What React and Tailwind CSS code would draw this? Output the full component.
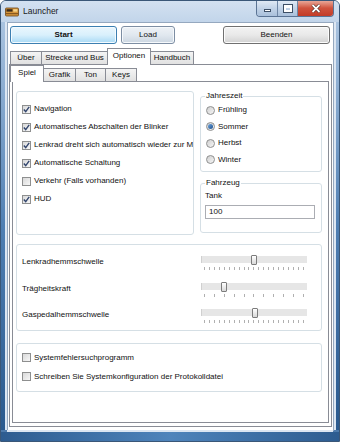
import React from 'react';

const Check = ({ checked, label }) => (
  <div className="flex items-center whitespace-nowrap h-full">
    <span className="w-[9px] h-[9px] shrink-0 border border-[#8e8f8f] bg-gradient-to-br from-[#d9d9d9] to-[#f7f7f7] flex items-center justify-center">
      {checked && (
        <svg width="7" height="7" viewBox="0 0 7 7">
          <path d="M0.8 3.6 L2.7 5.6 L6.2 0.9" stroke="#33466e" strokeWidth="1.4" fill="none" />
        </svg>
      )}
    </span>
    <span className="ml-[3px] text-[8px] leading-[10px] text-[#111]">{label}</span>
  </div>
);

const Radio = ({ checked, label }) => (
  <div className="flex items-center h-[16.5px] whitespace-nowrap">
    <span className="w-[9px] h-[9px] shrink-0 rounded-full border border-[#8e8f8f] bg-gradient-to-br from-[#cfcfcf] to-[#f6f6f6] flex items-center justify-center">
      {checked && <span className="w-[5px] h-[5px] rounded-full bg-gradient-to-br from-[#6fa6de] to-[#1d4f8c]" />}
    </span>
    <span className="ml-[3px] text-[8px] leading-[10px] text-[#111]">{label}</span>
  </div>
);

const Slider = ({ ticks, value }) => (
  <div className="relative w-[106px] h-[18px] shrink-0">
    <div className="absolute left-0 right-0 top-[3px] h-[7px] bg-[#e6e6e6] border-l border-[#d0d0d0]" />
    <div
      className="absolute top-[2px] w-[6px] h-[10px] rounded-[1px] border border-[#7c7c7c] bg-gradient-to-b from-[#ffffff] to-[#d8d8d8]"
      style={{ left: `${value * 100}px` }}
    />
    <div className="absolute left-[3px] right-[3px] top-[14px] h-[3px] flex justify-between">
      {Array.from({ length: ticks }).map((_, i) => (
        <span key={i} className="w-[1px] h-[3px] bg-[#b0b0b0]" />
      ))}
    </div>
  </div>
);

const Tab = ({ label, width, active }) =>
  active ? (
    <div
      className="relative z-10 -ml-[1px] -mb-[1px] h-[17px] border border-b-0 border-[#898c95] bg-white flex items-center justify-center pb-[2px] text-[8px]"
      style={{ width }}
    >
      {label}
    </div>
  ) : (
    <div
      className="-ml-[1px] first:ml-0 h-[13px] border border-b-0 border-[#898c95] bg-gradient-to-b from-[#f4f4f4] to-[#e1e1e1] flex items-center justify-center text-[8px]"
      style={{ width }}
    >
      {label}
    </div>
  );

const App = () => {
  return (
    <div className="w-[340px] h-[442px] flex flex-col border border-[#3a5778] rounded-t-[6px] bg-gradient-to-b from-[#c9d9ec] via-[#9bb8d9] to-[#4a78aa] font-['Liberation_Sans',Arial,sans-serif] text-[#111] overflow-hidden">
      {/* title bar */}
      <div className="h-[21px] shrink-0 flex items-start bg-gradient-to-b from-[#d3e1f1] to-[#c2d5ea]">
        <svg width="14" height="10" viewBox="0 0 14 10" className="ml-[4px] mt-[6px]">
          <rect x="0.5" y="1" width="13" height="8" rx="1" fill="#d4953c" stroke="#6b4418" strokeWidth="0.8" />
          <rect x="1.5" y="2.2" width="6" height="2.4" fill="#3b2a1a" />
          <rect x="8.3" y="2.2" width="4" height="2.4" fill="#f5d48a" />
          <rect x="1" y="6" width="12" height="1.2" fill="#8a5a20" />
        </svg>
        <span className="ml-[4px] mt-[5px] text-[8.5px] leading-[11px] text-[#1b1b1b]">Launcher</span>
        <div className="ml-auto mr-[5px] -mt-[1px] flex h-[17px] border border-t-0 border-[#5a7394] rounded-b-[4px] overflow-hidden">
          <div className="w-[21px] flex items-end justify-center pb-[4px] bg-gradient-to-b from-[#e4ecf6] via-[#c3d4e8] to-[#a9c0db] border-r border-[#6f87a6]">
            <span className="w-[7px] h-[3px] bg-white border border-[#3d4f66]" />
          </div>
          <div className="w-[20px] flex items-center justify-center bg-gradient-to-b from-[#e4ecf6] via-[#c3d4e8] to-[#a9c0db] border-r border-[#6f87a6]">
            <span className="w-[8px] h-[7px] border-[2px] border-t-[3px] border-white outline outline-1 outline-[#3d4f66]" />
          </div>
          <div className="w-[35px] flex items-center justify-center bg-gradient-to-b from-[#eab1a4] via-[#d0533e] to-[#c23b27]">
            <svg width="10" height="9" viewBox="0 0 10 9">
              <path d="M1.5 1 L8.5 8 M8.5 1 L1.5 8" stroke="#3d1a14" strokeWidth="3" />
              <path d="M1.5 1 L8.5 8 M8.5 1 L1.5 8" stroke="#ffffff" strokeWidth="1.8" />
            </svg>
          </div>
        </div>
      </div>

      {/* frame + client */}
      <div className="flex flex-1 min-h-0">
        <div className="w-[6px] flex">
          <div className="w-[4px] bg-gradient-to-b from-[#a9c3e0] via-[#4f7fb3] to-[#2b5a8e]" />
          <div className="w-[2px] bg-[#dce6f2]" />
        </div>

        <div className="w-[327px] h-[409px] border border-[#95a8bf] bg-white flex flex-col">
          {/* buttons */}
          <div className="flex pt-[3px] px-[2px] pr-[3px]">
            <button className="w-[107px] h-[18px] rounded-[3px] border border-[#3c7fb1] bg-gradient-to-b from-[#eaf6fd] via-[#d9f0fc] to-[#a7d9f5] text-[8px] font-bold shadow-[inset_0_0_0_1px_#f4fbff]">
              Start
            </button>
            <button className="ml-[4px] w-[54px] h-[18px] rounded-[3px] border border-[#7d8ea3] bg-gradient-to-b from-[#eef2f6] via-[#e1e8ef] to-[#cbd6e1] text-[8px] shadow-[inset_0_0_0_1px_#f6f9fc]">
              Load
            </button>
            <button className="ml-auto w-[107px] h-[18px] rounded-[3px] border border-[#707070] bg-gradient-to-b from-[#f3f3f3] via-[#e9e9e9] to-[#d2d2d2] text-[8px] shadow-[inset_0_0_0_1px_#fcfcfc]">
              Beenden
            </button>
          </div>

          {/* outer tab control */}
          <div className="mx-[1px] mt-[4px] flex flex-col">
            <div className="h-[16px] flex items-end pl-[1px]">
              <Tab label="Über" width={32} />
              <Tab label="Strecke und Bus" width={67} />
              <Tab label="Optionen" width={44} active />
              <Tab label="Handbuch" width={44} />
            </div>
            <div className="h-[363px] border border-[#898c95] bg-white pt-[1px] px-[2px]">
              {/* inner tab control */}
              <div className="h-[15px] flex items-end -ml-[1px]">
                <Tab label="Spiel" width={34} active />
                <Tab label="Grafik" width={33} />
                <Tab label="Ton" width={31} />
                <Tab label="Keys" width={32} />
              </div>
              <div className="h-[342px] border border-[#898c95] bg-white pl-[3px] pt-[9px]">
                <div className="flex">
                  <div className="w-[178px] h-[144px] border border-[#d5dfe5] rounded-[3px] overflow-hidden pl-[5px] pt-[8px]">
                    {[
                      ['Navigation', true],
                      ['Automatisches Abschalten der Blinker', true],
                      ['Lenkrad dreht sich automatisch wieder zur Mitte', true],
                      ['Automatische Schaltung', true],
                      ['Verkehr (Falls vorhanden)', false],
                      ['HUD', true],
                    ].map(([l, c]) => (
                      <div key={l} className="h-[18px]">
                        <Check label={l} checked={c} />
                      </div>
                    ))}
                  </div>

                  <div className="ml-[6px] w-[122px] flex flex-col">
                    <fieldset className="h-[81px] border border-[#d5dfe5] rounded-[3px] pl-[5px]">
                      <legend className="-ml-[1px] px-[1px] text-[8px] leading-[10px]">Jahreszeit</legend>
                      <div className="pt-[1px]">
                        <Radio label="Frühling" />
                        <Radio label="Sommer" checked />
                        <Radio label="Herbst" />
                        <Radio label="Winter" />
                      </div>
                    </fieldset>
                    <fieldset className="mt-[6px] h-[55px] border border-[#d5dfe5] rounded-[3px] pl-[4px]">
                      <legend className="px-[1px] text-[8px] leading-[10px]">Fahrzeug</legend>
                      <div className="pt-[3px] text-[8px] leading-[10px]">Tank</div>
                      <div className="mt-[4px] w-[110px] h-[14px] border border-[#abadb3] bg-white flex items-center pl-[3px] text-[8px]">
                        100
                      </div>
                    </fieldset>
                  </div>
                </div>

                <div className="mt-[9px] w-[306px] h-[87px] border border-[#d5dfe5] rounded-[3px] pl-[5px] pr-[14px] pt-[4px]">
                  {[
                    ['Lenkradhemmschwelle', 21, 0.5],
                    ['Trägheitskraft', 11, 0.2],
                    ['Gaspedalhemmschwelle', 21, 0.51],
                  ].map(([l, t, v]) => (
                    <div key={l} className="h-[26.5px] flex items-center">
                      <span className="flex-1 text-[8px] leading-[10px]">{l}</span>
                      <Slider ticks={t} value={v} />
                    </div>
                  ))}
                </div>

                <div className="mt-[12px] w-[306px] h-[49px] border border-[#d5dfe5] rounded-[3px] pl-[5px] pt-[4px]">
                  <div className="h-[19px]">
                    <Check label="Systemfehlersuchprogramm" />
                  </div>
                  <div className="h-[19px]">
                    <Check label="Schreiben Sie Systemkonfiguration der Protokolldatei" />
                  </div>
                </div>
              </div>
            </div>
          </div>
        </div>

        <div className="w-[5px] flex">
          <div className="w-[2px] bg-[#dce6f2]" />
          <div className="w-[3px] bg-gradient-to-b from-[#a9c3e0] via-[#4f7fb3] to-[#2b5a8e]" />
        </div>
      </div>

      {/* bottom frame */}
      <div className="h-[11px] shrink-0 flex flex-col">
        <div className="h-[2px] mx-[6px] bg-[#dce6f2]" />
        <div className="flex-1 bg-gradient-to-r from-[#2d5c90] via-[#4f84bb] to-[#2d5c90]" />
      </div>
    </div>
  );
};

export default App;
